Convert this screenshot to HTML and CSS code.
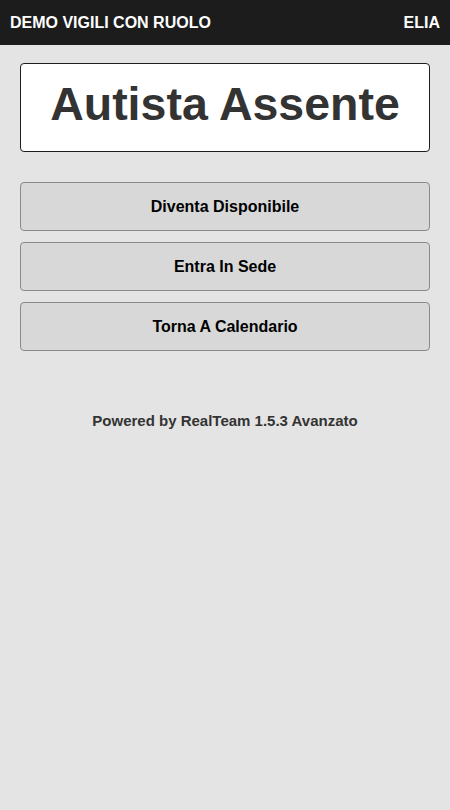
FILE: index.html
```html
<!DOCTYPE html>
<html lang="it">
<head>
<meta charset="utf-8">
<title>Demo Vigili</title>
<link rel="stylesheet" href="styles.css">
</head>
<body>
<header class="topbar">
  <span class="brand">DEMO VIGILI CON RUOLO</span>
  <span class="user">ELIA</span>
</header>
<main class="content">
  <div class="status">Autista Assente</div>
  <div class="actions">
    <button class="btn">Diventa Disponibile</button>
    <button class="btn">Entra In Sede</button>
    <button class="btn">Torna A Calendario</button>
  </div>
  <p class="footer">Powered by RealTeam 1.5.3 Avanzato</p>
</main>
</body>
</html>
```
FILE: styles.css
```css
html, body {
  margin: 0;
  padding: 0;
}
body {
  background: #e4e4e4;
  font-family: "Liberation Sans", Arial, Helvetica, sans-serif;
  min-height: 810px;
}
.topbar {
  height: 45px;
  background: #1c1c1c;
  color: #fff;
  display: flex;
  align-items: center;
  justify-content: space-between;
  padding: 0 10px;
  font-weight: bold;
  font-size: 16px;
  box-sizing: border-box;
}
.content {
  padding: 18px 20px 0;
  display: flex;
  flex-direction: column;
}
.status {
  height: 81px;
  box-sizing: content-box;
  background: #fff;
  border: 1px solid #1e1e1e;
  border-radius: 4px;
  display: flex;
  align-items: center;
  justify-content: center;
  font-weight: bold;
  font-size: 46.5px;
  line-height: 1.15;
  color: #333;
  padding-bottom: 6px;
}
.actions {
  margin-top: 30px;
  display: flex;
  flex-direction: column;
  gap: 11px;
}
.btn {
  height: 49px;
  background: #d8d8d8;
  border: 1px solid #8a8a8a;
  border-radius: 4px;
  font-family: inherit;
  font-weight: bold;
  font-size: 16px;
  color: #000;
  padding: 0;
}
.footer {
  margin: 61px 0 0;
  text-align: center;
  font-weight: bold;
  font-size: 15px;
  color: #333;
}
```
